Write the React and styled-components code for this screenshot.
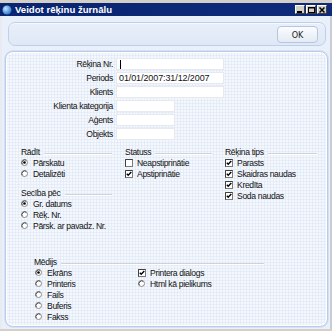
import React from "react";
import styled, { createGlobalStyle } from "styled-components";

const Global = createGlobalStyle`
  html, body { margin: 0; padding: 0; background: #d4d0c8; }
  body { width: 332px; height: 331px; overflow: hidden; font-family: "Liberation Sans", Arial, sans-serif; }
  * { box-sizing: border-box; }
`;

const Window = styled.div`
  width: 332px;
  height: 331px;
  display: flex;
  flex-direction: column;
  background: #d4d0c8;
  padding: 3px 0 2px 0;
`;

const TitleBar = styled.div`
  height: 13px;
  display: flex;
  align-items: center;
  background: linear-gradient(to right, #0a2470, #0c2a78 70%, #0d2b7a);
  padding: 0 3px 0 2px;
`;

const TitleIcon = styled.svg`
  width: 10px;
  height: 10px;
  flex: none;
`;

const TitleText = styled.span`
  color: #fff;
  font-weight: bold;
  font-size: 9.6px;
  margin-left: 3px;
  flex: 1;
`;

const Controls = styled.div`
  display: flex;
  gap: 1px;
  margin-right: 2px;
`;

const CtrlButton = styled.div`
  width: 10px;
  height: 9px;
  background: #d4d0c8;
  border: 1px solid;
  border-color: #fff #404040 #404040 #fff;
  display: flex;
  align-items: center;
  justify-content: center;
  svg { display: block; }
`;

const Body = styled.div`
  flex: 1;
  display: flex;
  flex-direction: column;
  background: #eaf0fa;
  border-left: 2px solid #e8ecf2;
  border-right: 2px solid #c8ccd4;
  padding: 6px 2px 2px 3px;
  gap: 5px;
`;

const Toolbar = styled.div`
  height: 24px;
  margin: 0 2px 0 3px;
  border: 1px solid #bcd0ee;
  border-radius: 7px;
  background: linear-gradient(#e8eff9, #dfe8f6);
  box-shadow: inset 0 1px 0 #f6f9fe;
  display: flex;
  align-items: center;
  justify-content: flex-end;
  padding-right: 7px;
`;

const OkButton = styled.button`
  width: 41px;
  height: 17px;
  border: 1px solid #b8c6dc;
  border-radius: 4px;
  background: linear-gradient(#fbfcfe, #e4ebf5);
  font-family: "DejaVu Sans Condensed", "DejaVu Sans", sans-serif;
  font-size: 9px;
  color: #222;
  padding: 0;
  margin-top: 1px;
`;

const Panel = styled.div`
  flex: 1;
  border: 1px solid #b9cceb;
  border-radius: 8px;
  box-shadow: inset 0 0 0 1px #ffffff, 0 0 0 1px #d6e2f4;
  background-color: #f4f7fc;
  background-image:
    repeating-linear-gradient(0deg, rgba(210, 222, 242, 0.35) 0 1px, transparent 1px 3px),
    repeating-linear-gradient(90deg, rgba(210, 222, 242, 0.35) 0 1px, transparent 1px 3px);
  padding: 6px 0 0 0;
  font-size: 8.6px;
  letter-spacing: -0.35px;
  color: #111;
  display: flex;
  flex-direction: column;
`;

const Form = styled.div`
  display: grid;
  grid-template-columns: 107px auto;
  column-gap: 3px;
  row-gap: 2px;
  align-items: center;
`;

const Label = styled.label`
  text-align: right;
  white-space: nowrap;
`;

const Input = styled.div`
  height: 12px;
  width: ${(p) => (p.$short ? 59 : 108)}px;
  background: #fff;
  border: 1px solid #e6e9ef;
  font-size: 9px;
  letter-spacing: -0.1px;
  line-height: 10px;
  padding-left: 2px;
  white-space: nowrap;
  display: flex;
  align-items: center;
`;

const Caret = styled.span`
  width: 1px;
  height: 9px;
  background: #000;
  margin-left: 1px;
`;

const Groups = styled.div`
  display: grid;
  grid-template-columns: 91px 87px 92px;
  column-gap: 13px;
  margin: 6px 0 0 15px;
  align-items: start;
`;

const Column = styled.div`
  display: flex;
  flex-direction: column;
  gap: 8px;
`;

const Group = styled.div`
  display: flex;
  flex-direction: column;
`;

const Heading = styled.div`
  height: 11px;
  display: flex;
  align-items: center;
  white-space: nowrap;
  &::after {
    content: "";
    flex: 1;
    height: 1px;
    background: #d0d3d9;
    box-shadow: 0 1px 0 #fff;
    margin: 3px 0 0 4px;
  }
`;

const Item = styled.div`
  height: 11px;
  display: flex;
  align-items: center;
  white-space: nowrap;
  svg { flex: none; display: block; }
`;

const ItemText = styled.span`
  margin-left: ${(p) => p.$gap || 5}px;
`;

const Media = styled.div`
  margin: 25px 0 0 28px;
  width: 230px;
`;

const MediaGrid = styled.div`
  display: grid;
  grid-template-columns: 103px auto;
  padding-left: 1px;
  align-items: start;
`;

const Radio = ({ checked }) => (
  <svg width="7" height="7" viewBox="0 0 7 7">
    <circle cx="3.5" cy="3.5" r="3" fill="#fff" stroke="#8a8a8a" strokeWidth="1" />
    <path d="M1.2 5.2 A3 3 0 0 1 5.2 1.2" fill="none" stroke="#505050" strokeWidth="1" />
    {checked && <circle cx="3.5" cy="3.5" r="1.3" fill="#000" />}
  </svg>
);

const Check = ({ checked }) => (
  <svg width="8" height="8" viewBox="0 0 8 8">
    <rect x="0.5" y="0.5" width="7" height="7" fill="#fff" stroke="#7a7a7a" />
    <path d="M0.5 7.5 V0.5 H7.5" fill="none" stroke="#404040" />
    {checked && (
      <path d="M1.8 3.8 L3.2 5.3 L6.3 2" fill="none" stroke="#000" strokeWidth="1.4" />
    )}
  </svg>
);

const RadioItem = ({ checked, children }) => (
  <Item>
    <Radio checked={checked} />
    <ItemText>{children}</ItemText>
  </Item>
);

const CheckItem = ({ checked, children }) => (
  <Item>
    <Check checked={checked} />
    <ItemText $gap={4}>{children}</ItemText>
  </Item>
);

export default function App() {
  return (
    <>
      <Global />
      <Window>
        <TitleBar>
          <TitleIcon viewBox="0 0 10 10">
            <defs>
              <radialGradient id="g" cx="0.35" cy="0.35" r="0.7">
                <stop offset="0" stopColor="#bfe4ff" />
                <stop offset="1" stopColor="#2a78c8" />
              </radialGradient>
            </defs>
            <circle cx="5" cy="5" r="4.5" fill="url(#g)" />
          </TitleIcon>
          <TitleText>Veidot rēķinu žurnālu</TitleText>
          <Controls>
            <CtrlButton>
              <svg width="6" height="6" viewBox="0 0 6 6"><rect x="0" y="4" width="5" height="2" fill="#000" /></svg>
            </CtrlButton>
            <CtrlButton>
              <svg width="7" height="6" viewBox="0 0 7 6"><rect x="0.5" y="0.5" width="6" height="5" fill="none" stroke="#000" /><rect x="0" y="0" width="7" height="1.5" fill="#000" /></svg>
            </CtrlButton>
            <CtrlButton>
              <svg width="6" height="6" viewBox="0 0 6 6"><path d="M0.5 0.5 L5.5 5.5 M5.5 0.5 L0.5 5.5" stroke="#000" strokeWidth="1.5" /></svg>
            </CtrlButton>
          </Controls>
        </TitleBar>
        <Body>
          <Toolbar>
            <OkButton>OK</OkButton>
          </Toolbar>
          <Panel>
            <Form>
              <Label>Rēķina Nr.</Label>
              <Input><Caret /></Input>
              <Label>Periods</Label>
              <Input>01/01/2007:31/12/2007</Input>
              <Label>Klients</Label>
              <Input />
              <Label>Klienta kategorija</Label>
              <Input $short />
              <Label>Aģents</Label>
              <Input $short />
              <Label>Objekts</Label>
              <Input $short />
            </Form>
            <Groups>
              <Column>
                <Group>
                  <Heading>Rādīt</Heading>
                  <RadioItem checked>Pārskatu</RadioItem>
                  <RadioItem>Detalizēti</RadioItem>
                </Group>
                <Group>
                  <Heading>Secība pēc</Heading>
                  <RadioItem checked>Gr. datums</RadioItem>
                  <RadioItem>Rēķ. Nr.</RadioItem>
                  <RadioItem>Pārsk. ar pavadz. Nr.</RadioItem>
                </Group>
              </Column>
              <Group>
                <Heading>Statuss</Heading>
                <CheckItem>Neapstiprinātie</CheckItem>
                <CheckItem checked>Apstiprinātie</CheckItem>
              </Group>
              <Group>
                <Heading>Rēķina tips</Heading>
                <CheckItem checked>Parasts</CheckItem>
                <CheckItem checked>Skaidras naudas</CheckItem>
                <CheckItem checked>Kredīta</CheckItem>
                <CheckItem checked>Soda naudas</CheckItem>
              </Group>
            </Groups>
            <Media>
              <Heading>Mēdijs</Heading>
              <MediaGrid>
                <Group>
                  <RadioItem checked>Ekrāns</RadioItem>
                  <RadioItem>Printeris</RadioItem>
                  <RadioItem>Fails</RadioItem>
                  <RadioItem>Buferis</RadioItem>
                  <RadioItem>Fakss</RadioItem>
                </Group>
                <Group>
                  <CheckItem checked>Printera dialogs</CheckItem>
                  <RadioItem>Html kā pielikums</RadioItem>
                </Group>
              </MediaGrid>
            </Media>
          </Panel>
        </Body>
      </Window>
    </>
  );
}
